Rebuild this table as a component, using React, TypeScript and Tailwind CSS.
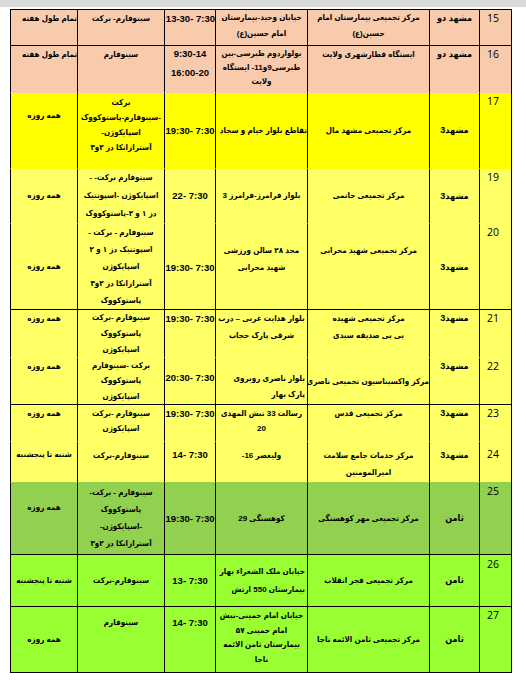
type Cell = { t: string[]; pt?: string; mid?: boolean; right?: boolean; x?: string; r?: string };
type Row = { h: string; bg: string; b: string; cells: Cell[] };

const peach = 'bg-[#f8cbad]';
const yellow = 'bg-[#ffff00]';
const pale = 'bg-[#ffff66]';
const green = 'bg-[#92d050]';
const lime = 'bg-[#99ff33]';

// cells run right to left: # | region | center | address | hours | vaccine | days
const rows: Row[] = [
  {
    h: 'h-[36px]', bg: peach, b: 'border-b-black',
    cells: [
      { t: ['15'] },
      { t: ['مشهد دو'] },
      { t: ['مرکز  تجمیعی بیمارستان امام', 'حسین(ع)'], r: 'auto-rows-[16px]' },
      { t: ['خیابان وحید-بیمارستان', 'امام حسین(ع)'], r: 'auto-rows-[16px]' },
      { t: ['7:30 -13-30'], right: true },
      { t: ['سینوفارم- برکت'] },
      { t: ['تمام طول هفته'], right: true },
    ],
  },
  {
    h: 'h-[47px]', bg: peach, b: 'border-b-[#f8cbad]',
    cells: [
      { t: ['16'] },
      { t: ['مشهد دو'] },
      { t: ['ایستگاه قطارشهری ولایت'] },
      { t: ['بولواردوم طبرسی-بین', 'طبرسی9و11- ایستگاه', 'ولایت'], pt: 'pt-[1px]', r: 'auto-rows-[14px]' },
      { t: ['9:30-14', '16:00-20'], r: 'grid-rows-[16px_22px]' },
      { t: ['سینوفارم'] },
      { t: ['تمام طول هفته'], right: true },
    ],
  },
  {
    h: 'h-[76px]', bg: yellow, b: 'border-b-[#ffff00]',
    cells: [
      { t: ['17'] },
      { t: ['مشهد3'], mid: true },
      { t: ['مرکز تجمیعی مشهد مال'], mid: true },
      { t: ['تقاطع بلوار خیام و سجاد'], mid: true, right: true },
      { t: ['7:30 -19:30'], mid: true },
      { t: ['برکت', '-سینوفارم-پاستوکووک', 'اسپایکوژن-', 'آسترازانکا دز ۲و۳'], pt: 'pt-[2px]', r: 'auto-rows-[15px]' },
      { t: ['همه روزه'], pt: 'pt-[14px]' },
    ],
  },
  {
    h: 'h-[55px]', bg: pale, b: 'border-b-[#ffff66]',
    cells: [
      { t: ['19'] },
      { t: ['مشهد3'], mid: true },
      { t: ['مرکز تجمیعی حاتمی'], mid: true },
      { t: ['بلوار فرامرز-فرامرز 3'], mid: true },
      { t: ['7:30 -22'], mid: true },
      { t: ['سینوفارم برکت- -', 'اسپایکوژن -اسپوتنیک', 'دز ۱ و ۲-پاستوکووک'], r: 'auto-rows-[18px]' },
      { t: ['همه روزه'], mid: true },
    ],
  },
  {
    h: 'h-[86px]', bg: pale, b: 'border-b-black',
    cells: [
      { t: ['20'] },
      { t: ['مشهد3'], pt: 'pt-[35px]' },
      { t: ['مرکز تجمیعی شهید محرابی'], pt: 'pt-[18px]' },
      { t: ['مجد ۲۸ سالن ورزشی', 'شهید محرابی'], pt: 'pt-[18px]' },
      { t: ['7:30 -19:30'], pt: 'pt-[35px]' },
      { t: ['سینوفارم - برکت -', 'اسپوتنیک دز ۱ و ۲', 'اسپایکوژن', 'آسترازانکا دز ۲و۳', 'پاستوکووک'] },
      { t: ['همه روزه'], pt: 'pt-[34px]' },
    ],
  },
  {
    h: 'h-[48px]', bg: pale, b: 'border-b-[#ffff66]',
    cells: [
      { t: ['21'] },
      { t: ['مشهد3'] },
      { t: ['مرکز تجمیعی شهیده', 'بی بی صدیقه سیدی'] },
      { t: ['بلوار هدایت غربی – درب', 'شرقی پارک حجاب'] },
      { t: ['7:30 -19:30'] },
      { t: ['سینوفارم -برکت', 'پاستوکووک', 'اسپایکوژن'], r: 'auto-rows-[16px]' },
      { t: ['همه روزه'] },
    ],
  },
  {
    h: 'h-[47px]', bg: pale, b: 'border-b-black',
    cells: [
      { t: ['22'] },
      { t: ['مشهد3'] },
      { t: ['مرکز واکسیناسیون تجمیعی ناصری'], pt: 'pt-[15px]' },
      { t: ['بلوار ناصری روبروی', 'پارک بهار'], pt: 'pt-[13px]', right: true, x: 'pr-[2px]', r: 'auto-rows-[16px]' },
      { t: ['7:30 -20:30'], pt: 'pt-[11px]' },
      { t: ['برکت -سینوفارم', 'پاستوکووک', 'اسپایکوژن'], r: 'auto-rows-[15.5px]' },
      { t: ['همه روزه'] },
    ],
  },
  {
    h: 'h-[37px]', bg: pale, b: 'border-b-[#ffff66]',
    cells: [
      { t: ['23'] },
      { t: ['مشهد3'] },
      { t: ['مرکز تجمیعی قدس'] },
      { t: ['رسالت 33 نبش المهدی', '20'], pt: 'pt-[1px]', r: 'auto-rows-[15px]' },
      { t: ['7:30 -19:30'] },
      { t: ['سینوفارم -برکت', 'اسپایکوژن'], pt: 'pt-[1px]', r: 'auto-rows-[15px]' },
      { t: ['همه روزه'] },
    ],
  },
  {
    h: 'h-[41px]', bg: pale, b: 'border-b-[#92d050]',
    cells: [
      { t: ['24'], pt: 'pt-[4px]' },
      { t: ['مشهد3'], pt: 'pt-[5px]' },
      { t: ['مرکز  خدمات جامع سلامت', 'امیرالمومنین'], pt: 'pt-[5px]' },
      { t: ['ولیعصر 16-'], pt: 'pt-[5px]' },
      { t: ['7:30 -14'], pt: 'pt-[4px]' },
      { t: ['سینوفارم-برکت'], pt: 'pt-[5px]' },
      { t: ['شنبه تا پنجشنبه'], pt: 'pt-[4px]' },
    ],
  },
  {
    h: 'h-[72px]', bg: green, b: 'border-b-black',
    cells: [
      { t: ['25'] },
      { t: ['ثامن'], mid: true },
      { t: ['مرکز تجمیعی مهر کوهسنگی'], mid: true },
      { t: ['کوهسنگی 29'], mid: true },
      { t: ['7:30 -19:30'], mid: true },
      { t: ['سینوفارم - برکت-', 'پاستوکووک', '-اسپایکوژن-', 'آسترازانکا دز ۲و۳'], pt: 'pt-[1px]' },
      { t: ['همه روزه'], pt: 'pt-[16px]' },
    ],
  },
  {
    h: 'h-[52px]', bg: lime, b: 'border-b-black',
    cells: [
      { t: ['26'], pt: 'pt-[1px]' },
      { t: ['ثامن'], mid: true },
      { t: ['مرکز تجمیعی فجر انقلاب'], mid: true },
      { t: ['خیابان ملک الشعراء بهار', 'بیمارستان 550 ارتش'], mid: true, right: true, x: 'pr-[2px]', r: 'auto-rows-[18px]' },
      { t: ['7:30 -13'], mid: true },
      { t: ['سینوفارم-برکت'], mid: true },
      { t: ['شنبه تا پنجشنبه'], mid: true },
    ],
  },
  {
    h: 'h-[66px]', bg: lime, b: 'border-b-black',
    cells: [
      { t: ['27'] },
      { t: ['ثامن'], mid: true },
      { t: ['مرکز تجمیعی ثامن  الائمه ناجا'], mid: true },
      { t: ['خیابان امام خمینی-نبش', 'امام خمینی ۵۷', 'بیمارستان ثامن الائمه', 'ناجا'], pt: 'pt-[2px]', r: 'auto-rows-[14.5px]' },
      { t: ['7:30 -14'], pt: 'pt-[7px]' },
      { t: ['سینوفارم'], pt: 'pt-[7px]' },
      { t: ['همه روزه'], mid: true },
    ],
  },
];

export default function App() {
  return (
    <div className="min-h-screen bg-white">
      <div className="h-[7px] bg-[#dadada]" />
      <div className="pt-[2px] pl-[10px]">
        <div
          dir="rtl"
          className="grid grid-cols-[32px_50px_122px_92px_51px_87px_67px] w-[502px] border-t border-r border-black font-['Liberation_Sans','DejaVu_Sans_Condensed','DejaVu_Sans',sans-serif] text-[8px] font-bold text-black"
        >
          {rows.map((r, ri) =>
            r.cells.map((cell, ci) => {
              const isNum = ci === 0;
              const align = cell.right ? 'text-right' : isNum ? 'text-left pl-[7px]' : 'text-center';
              const font = isNum
                ? "font-['Open_Sans','Liberation_Sans',sans-serif] font-normal text-[10.5px]"
                : ci === 1
                ? 'text-[9px]'
                : ci === 4
                ? 'text-[9.5px]'
                : '';
              return (
                <div
                  key={`${ri}-${ci}`}
                  className={`flex flex-col whitespace-nowrap border-l border-b border-l-black ${r.b} ${r.h} ${r.bg} ${
                    cell.mid ? 'justify-center' : 'justify-start'
                  } ${align} ${font} ${cell.pt ?? ''} ${cell.x ?? ''}`}
                >
                  <div className={`grid items-center leading-none ${cell.r ?? 'auto-rows-[17px]'}`}>
                    {cell.t.map((line, li) => (
                      <div key={li}>{line}</div>
                    ))}
                  </div>
                </div>
              );
            })
          )}
        </div>
      </div>
    </div>
  );
}
